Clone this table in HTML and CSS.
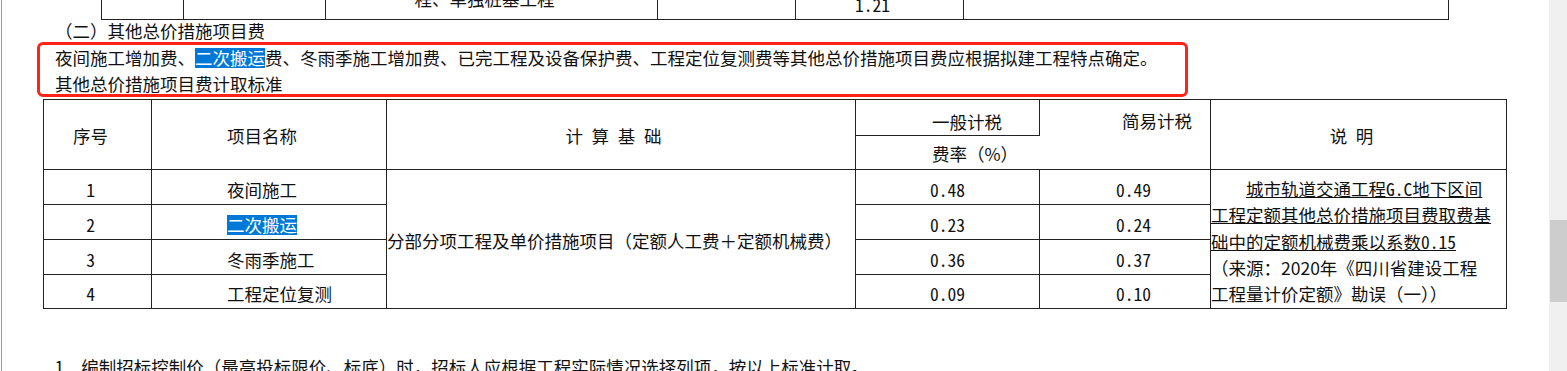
FILE: index.html
```html
<!DOCTYPE html>
<html lang="zh-CN">
<head>
<meta charset="utf-8">
<title>其他总价措施项目费</title>
<link rel="stylesheet" href="styles.css">
</head>
<body>
<div class="screen">
  <div class="page">
    <div class="prev-table">
      <div class="pc"></div>
      <div class="pc"></div>
      <div class="pc pc-text">程、单独桩基工程</div>
      <div class="pc"></div>
      <div class="pc pc-num num">1.21</div>
      <div class="pc"></div>
    </div>

    <div class="text">
      <div class="l1">（二）其他总价措施项目费</div>
      <div class="l2">夜间施工增加费、<span class="sel">二次搬运</span>费、冬雨季施工增加费、已完工程及设备保护费、工程定位复测费等其他总价措施项目费应根据拟建工程特点确定。</div>
      <div class="l3">其他总价措施项目费计取标准</div>
    </div>

    <div class="fee-table">
      <div class="c k1 hd">序号</div>
      <div class="c k2 hd">项目名称</div>
      <div class="c k3 hd">计&ensp;算&ensp;基&ensp;础</div>
      <div class="c h-gen">一般计税</div>
      <div class="c h-simple">简易计税</div>
      <div class="c k6 hd">说&ensp;明</div>
      <div class="c h-rate">费率（%）</div>

      <div class="c k1 r3 dt num">1</div>
      <div class="c k2 r3 dt">夜间施工</div>
      <div class="c k4 r3 dt num">0.48</div>
      <div class="c k5 r3 dt num">0.49</div>

      <div class="c k1 r4 dt num">2</div>
      <div class="c k2 r4 dt"><span class="sel">二次搬运</span></div>
      <div class="c k4 r4 dt num">0.23</div>
      <div class="c k5 r4 dt num">0.24</div>

      <div class="c k1 r5 dt num">3</div>
      <div class="c k2 r5 dt">冬雨季施工</div>
      <div class="c k4 r5 dt num">0.36</div>
      <div class="c k5 r5 dt num">0.37</div>

      <div class="c k1 r6 dt num">4</div>
      <div class="c k2 r6 dt">工程定位复测</div>
      <div class="c k4 r6 dt num">0.09</div>
      <div class="c k5 r6 dt num">0.10</div>

      <div class="c base">分部分项工程及单价措施项目（定额人工费＋定额机械费）</div>
      <div class="c note-cell">
        <div class="nl nl1"><span class="ul">城市轨道交通工程<span class="num">G.C</span>地下区间</span></div>
        <div class="nl"><span class="ul">工程定额其他总价措施项目费取费基</span></div>
        <div class="nl"><span class="ul">础中的定额机械费乘以系数<span class="num">0.15</span></span></div>
        <div class="nl">（来源：2020年《四川省建设工程</div>
        <div class="nl">工程量计价定额》勘误（一））</div>
      </div>
    </div>

    <div class="note"><span class="num">1. </span>编制招标控制价（最高投标限价、标底）时，招标人应根据工程实际情况选择列项，按以上标准计取。</div>

    <div class="redbox"></div>
  </div>
  <div class="scrollbar"><div class="thumb"></div></div>
</div>
</body>
</html>
```

FILE: styles.css
```css
html, body {
  margin: 0;
  padding: 0;
  background: #fff;
}
body {
  font-family: "Noto Sans CJK SC", "Noto Sans", sans-serif;
  font-size: 17.5px;
  color: #111;
}
.screen {
  display: flex;
  width: 1567px;
  height: 371px;
  overflow: hidden;
}
.page {
  position: relative;
  flex: none;
  width: 1547px;
  height: 371px;
  margin-left: 1px;
  border-left: 1px solid #9a9a9a;
  overflow: hidden;
}
.num {
  font-family: "Noto Sans Mono CJK SC", "Liberation Mono", monospace;
}

/* remnant of the previous table */
.prev-table {
  display: grid;
  grid-template-columns: 81px 141px 331px 137px 167px 484px;
  column-gap: 1px;
  width: 1348px;
  height: 41px;
  box-sizing: border-box;
  padding: 0 1px 1px 1px;
  margin: -21px 0 0 99px;
  background: #222;
}
.pc {
  background: #fff;
  display: flex;
  line-height: 26px;
  white-space: nowrap;
}
.pc-text {
  align-items: flex-end;
  justify-content: center;
  padding-right: 14px;
  padding-bottom: 7px;
}
.pc-num {
  align-items: flex-end;
  justify-content: center;
  padding-right: 14px;
  padding-bottom: 1px;
}

/* paragraph lines */
.text {
  margin-top: -2px;
  padding-left: 53px;
  white-space: nowrap;
}
.l1 { line-height: 26px; }
.l2 { line-height: 28px; }
.l3 { line-height: 24px; }
.sel {
  display: inline-block;
  background: #0078d7;
  color: #fff;
  line-height: 19px;
  padding-bottom: 1px;
}

/* fee table */
.fee-table {
  display: grid;
  width: 1464px;
  box-sizing: border-box;
  grid-template-columns: 107px 234px 468px 183px 170px 295px;
  grid-template-rows: 35px 33px 34px 34px 34px 33px;
  gap: 1px;
  padding: 1px;
  margin: 3px 0 0 41px;
  background: #222;
}
.c {
  background: #fff;
  display: flex;
  align-items: center;
  line-height: 26px;
  white-space: nowrap;
  box-sizing: border-box;
}
.hd { grid-row: 1 / 3; padding-top: 3px; }
.dt { padding-top: 5px; }
.k1 { grid-column: 1; justify-content: center; padding-right: 14px; }
.k2 { grid-column: 2; justify-content: flex-start; padding-left: 75px; }
.k3 { grid-column: 3; justify-content: center; padding-right: 15px; }
.k4 { grid-column: 4; justify-content: center; }
.k5 { grid-column: 5; justify-content: center; padding-left: 17px; }
.k6 { grid-column: 6; justify-content: center; padding-right: 14px; }
.r3 { grid-row: 3; }
.r4 { grid-row: 4; }
.r5 { grid-row: 5; }
.r6 { grid-row: 6; }

.h-gen {
  grid-column: 4;
  grid-row: 1;
  padding-left: 76px;
  padding-top: 9px;
}
.h-rate {
  grid-column: 4;
  grid-row: 2;
  margin-right: -1px;
  padding-left: 76px;
  padding-top: 3px;
}
.h-simple {
  grid-column: 5;
  grid-row: 1 / 3;
  align-items: flex-start;
  padding-left: 82px;
  padding-top: 8px;
}
.base {
  grid-column: 3;
  grid-row: 3 / 7;
  padding-top: 4px;
}
.note-cell {
  grid-column: 6;
  grid-row: 3 / 7;
  flex-direction: column;
  align-items: flex-start;
  justify-content: flex-start;
  padding-top: 6px;
}
.nl {
  line-height: 26.25px;
}
.nl1 {
  padding-left: 35px;
}
.ul {
  text-decoration: underline;
  text-decoration-thickness: 1px;
  text-underline-offset: 1px;
}

/* following paragraph */
.note {
  margin-top: 45px;
  padding-left: 53px;
  line-height: 26px;
  white-space: nowrap;
}

/* annotation overlay */
.redbox {
  position: absolute;
  left: 35px;
  top: 42px;
  width: 1151px;
  height: 55px;
  box-sizing: border-box;
  border: 3px solid #ff2417;
  border-radius: 6px;
  pointer-events: none;
}

/* scrollbar */
.scrollbar {
  flex: none;
  width: 18px;
  height: 371px;
  background: #f0f0f0;
}
.thumb {
  margin: 220px 0 0 1px;
  height: 82px;
  background: #cdcdcd;
}
```
